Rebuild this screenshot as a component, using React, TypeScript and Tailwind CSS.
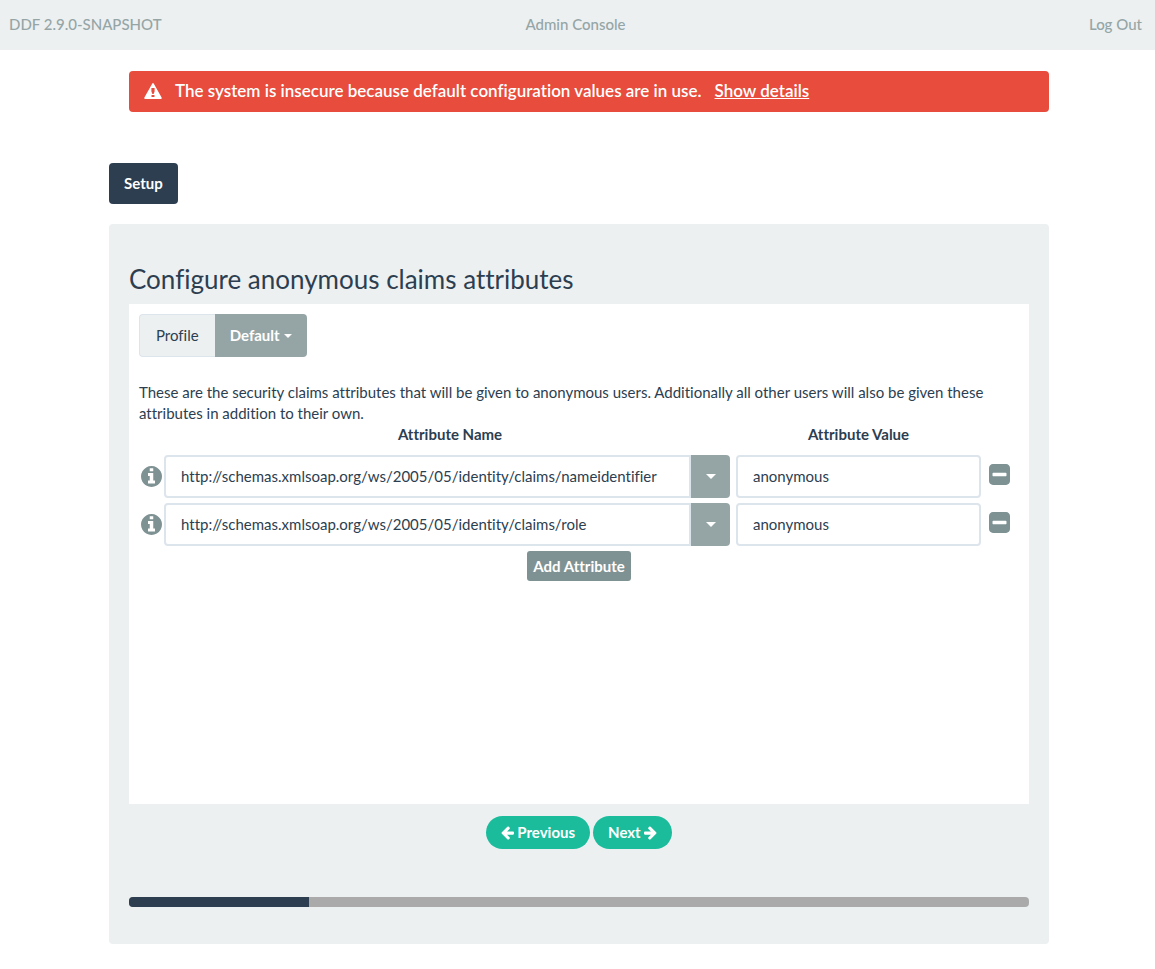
import React, { useState } from "react";

const ICONS = {
  info: "M1152 1376v-160q0-14-9-23t-23-9h-96v-512q0-14-9-23t-23-9h-320q-14 0-23 9t-9 23v160q0 14 9 23t23 9h96v320h-96q-14 0-23 9t-9 23v160q0 14 9 23t23 9h448q14 0 23-9t9-23zm-128-896v-160q0-14-9-23t-23-9h-192q-14 0-23 9t-9 23v160q0 14 9 23t23 9h192q14 0 23-9t9-23zm640 416q0 209-103 385.500t-279.500 279.500-385.500 103-385.500-103-279.500-279.500-103-385.500 103-385.500 279.500-279.500 385.500-103 385.500 103 279.500 279.500 103 385.500z",
  minus:
    "M1408 960v-128q0-26-19-45t-45-19h-896q-26 0-45 19t-19 45v128q0 26 19 45t45 19h896q26 0 45-19t19-45zm256-544v960q0 119-84.500 203.500t-203.500 84.500h-960q-119 0-203.500-84.500t-84.500-203.500v-960q0-119 84.500-203.500t203.500-84.500h960q119 0 203.500 84.500t84.500 203.500z",
  left: "M1664 896v128q0 53-32.500 90.500t-84.500 37.500h-704l293 294q38 36 38 90t-38 90l-75 76q-37 37-90 37-52 0-91-37l-651-652q-37-37-37-90 0-52 37-91l651-650q38-38 91-38 52 0 90 38l75 74q38 38 38 91t-38 91l-293 293h704q52 0 84.500 37.500t32.500 90.500z",
  right:
    "M1600 960q0 54-37 91l-651 651q-39 37-91 37-51 0-90-37l-75-75q-38-38-38-91t38-91l293-293h-704q-52 0-84.500-37.500t-32.500-90.500v-128q0-53 32.500-90.500t84.500-37.500h704l-293-294q-38-36-38-90t38-90l75-75q38-38 90-38 53 0 91 38l651 651q37 35 37 90z",
};

function Icon({ name, className }: { name: keyof typeof ICONS; className: string }) {
  return (
    <svg viewBox="128 128 1536 1536" className={`fill-current overflow-visible ${className}`} aria-hidden="true">
      <path d={ICONS[name]} />
    </svg>
  );
}

function WarningIcon() {
  return (
    <svg viewBox="0 0 18 16" className="h-4 w-[18px] shrink-0 fill-current" aria-hidden="true">
      <path
        fillRule="evenodd"
        d="M8.3.5q.7-.9 1.4 0l7.900 14q.4 1.500-.7 1.500H1.100q-1.100 0-.7-1.500zM7.400 5v3.600L8.400 11h1.200l1-2.400V5zM7.500 12v2h3v-2z"
      />
    </svg>
  );
}

function Caret({ className }: { className: string }) {
  return (
    <svg viewBox="0 0 10 5" className={`fill-current ${className}`} aria-hidden="true">
      <path d="M0 0h10L5 5z" />
    </svg>
  );
}

const initialRows = [
  { name: "http://schemas.xmlsoap.org/ws/2005/05/identity/claims/nameidentifier", value: "anonymous" },
  { name: "http://schemas.xmlsoap.org/ws/2005/05/identity/claims/role", value: "anonymous" },
];

const progress = 20;

export default function App() {
  const [rows, setRows] = useState(initialRows);

  const update = (index: number, field: "name" | "value", text: string) =>
    setRows(rows.map((row, i) => (i === index ? { ...row, [field]: text } : row)));

  return (
    <div className="font-['Lato',sans-serif] text-[15px] leading-[21px] text-[#2c3e50] [font-variant-ligatures:none]">
      <header className="grid h-[50px] grid-cols-3 items-center bg-[#ecf0f1] pr-[13px] pb-[2px] pl-[9px] font-medium text-[#95a5a6]">
        <span>DDF 2.9.0-SNAPSHOT</span>
        <span className="text-center">Admin Console</span>
        <a href="#logout" className="justify-self-end">Log Out</a>
      </header>

      <main className="pt-[21px] pb-6 pl-[3px]">
        <div className="mx-auto max-w-[940px]">
          <div role="alert" className="ml-5 flex h-[41px] items-center rounded bg-[#e74c3c] px-[15px] pb-[2px] text-[17px] font-semibold text-white">
            <WarningIcon />
            <span className="ml-[13px]">The system is insecure because default configuration values are in use.</span>
            <a href="#details" className="ml-[13px] underline">Show details</a>
          </div>

          <button type="button" className="mt-[51px] block h-[41px] rounded bg-[#2c3e50] px-[15px] font-bold text-white">
            Setup
          </button>

          <section className="mt-5 rounded bg-[#ecf0f1] px-5 pt-[39px] pb-[37px]">
            <h1 className="text-[26px] leading-8">Configure anonymous claims attributes</h1>

            <div className="mt-[9px] min-h-[500px] bg-white p-[10px]">
              <div className="flex h-[43px]">
                <span id="profile-label" className="flex items-center rounded-l border border-r-0 border-[#dce4ec] bg-[#ecf0f1] px-4">
                  Profile
                </span>
                <button
                  type="button"
                  aria-describedby="profile-label"
                  className="flex items-center gap-1 rounded-r bg-[#95a5a6] px-[15px] font-bold text-white"
                >
                  Default <Caret className="h-1 w-2" />
                </button>
              </div>

              <p className="mt-[25px]">
                These are the security claims attributes that will be given to anonymous users. Additionally all other
                users will also be given these attributes in addition to their own.
              </p>

              <table className="w-full table-fixed">
                <colgroup>
                  <col className="w-[25px]" />
                  <col />
                  <col className="w-[245px]" />
                  <col className="w-[38px]" />
                </colgroup>
                <thead>
                  <tr>
                    <td />
                    <th scope="col" className="pb-[10px] font-bold">Attribute Name</th>
                    <th scope="col" className="pb-[10px] font-bold">Attribute Value</th>
                    <td />
                  </tr>
                </thead>
                <tbody>
                  {rows.map((row, i) => (
                    <tr key={i}>
                      <td className="pb-[5px] pl-[2px] text-[#7f9293]">
                        <Icon name="info" className="h-[21px] w-[21px]" />
                      </td>
                      <td className="pr-[6px] pb-[5px]">
                        <div className="flex h-[43px]">
                          <input
                            type="text"
                            aria-label="Attribute Name"
                            value={row.name}
                            onChange={(e) => update(i, "name", e.target.value)}
                            className="min-w-0 flex-1 rounded-l border-2 border-[#dce4ec] bg-white px-[15px]"
                          />
                          <button
                            type="button"
                            aria-label="Choose attribute name"
                            className="flex w-[39px] items-center justify-center rounded-r bg-[#95a5a6] text-white"
                          >
                            <Caret className="h-[5px] w-[10px]" />
                          </button>
                        </div>
                      </td>
                      <td className="pb-[5px]">
                        <div className="flex h-[43px]">
                          <input
                            type="text"
                            aria-label="Attribute Value"
                            value={row.value}
                            onChange={(e) => update(i, "value", e.target.value)}
                            className="min-w-0 flex-1 rounded border-2 border-[#dce4ec] bg-white px-[15px]"
                          />
                        </div>
                      </td>
                      <td className="pb-[10px] pl-2">
                        <button
                          type="button"
                          aria-label="Remove attribute"
                          onClick={() => setRows(rows.filter((_, n) => n !== i))}
                          className="block text-[#7f9293]"
                        >
                          <Icon name="minus" className="h-[21px] w-[21px]" />
                        </button>
                      </td>
                    </tr>
                  ))}
                </tbody>
              </table>

              <button
                type="button"
                onClick={() => setRows([...rows, { name: "", value: "" }])}
                className="mx-auto block h-[30px] rounded-[3px] bg-[#7f9293] px-[6px] font-bold text-white"
              >
                Add Attribute
              </button>
            </div>

            <div className="mt-3 flex justify-center gap-[3px] font-bold text-white">
              <button type="button" className="flex h-[33px] items-center gap-[3px] rounded-full bg-[#1abc9c] px-[15px]">
                <Icon name="left" className="h-[13px] w-[13px]" />
                Previous
              </button>
              <button type="button" className="flex h-[33px] items-center gap-[3px] rounded-full bg-[#1abc9c] px-[15px]">
                Next
                <Icon name="right" className="h-[13px] w-[13px]" />
              </button>
            </div>

            <div
              role="progressbar"
              aria-label="Setup progress"
              aria-valuenow={progress}
              className="mt-12 h-[10px] overflow-hidden rounded bg-[#aaa]"
            >
              <div className="h-full bg-[#2c3e50]" style={{ width: `${progress}%` }} />
            </div>
          </section>
        </div>
      </main>
    </div>
  );
}
